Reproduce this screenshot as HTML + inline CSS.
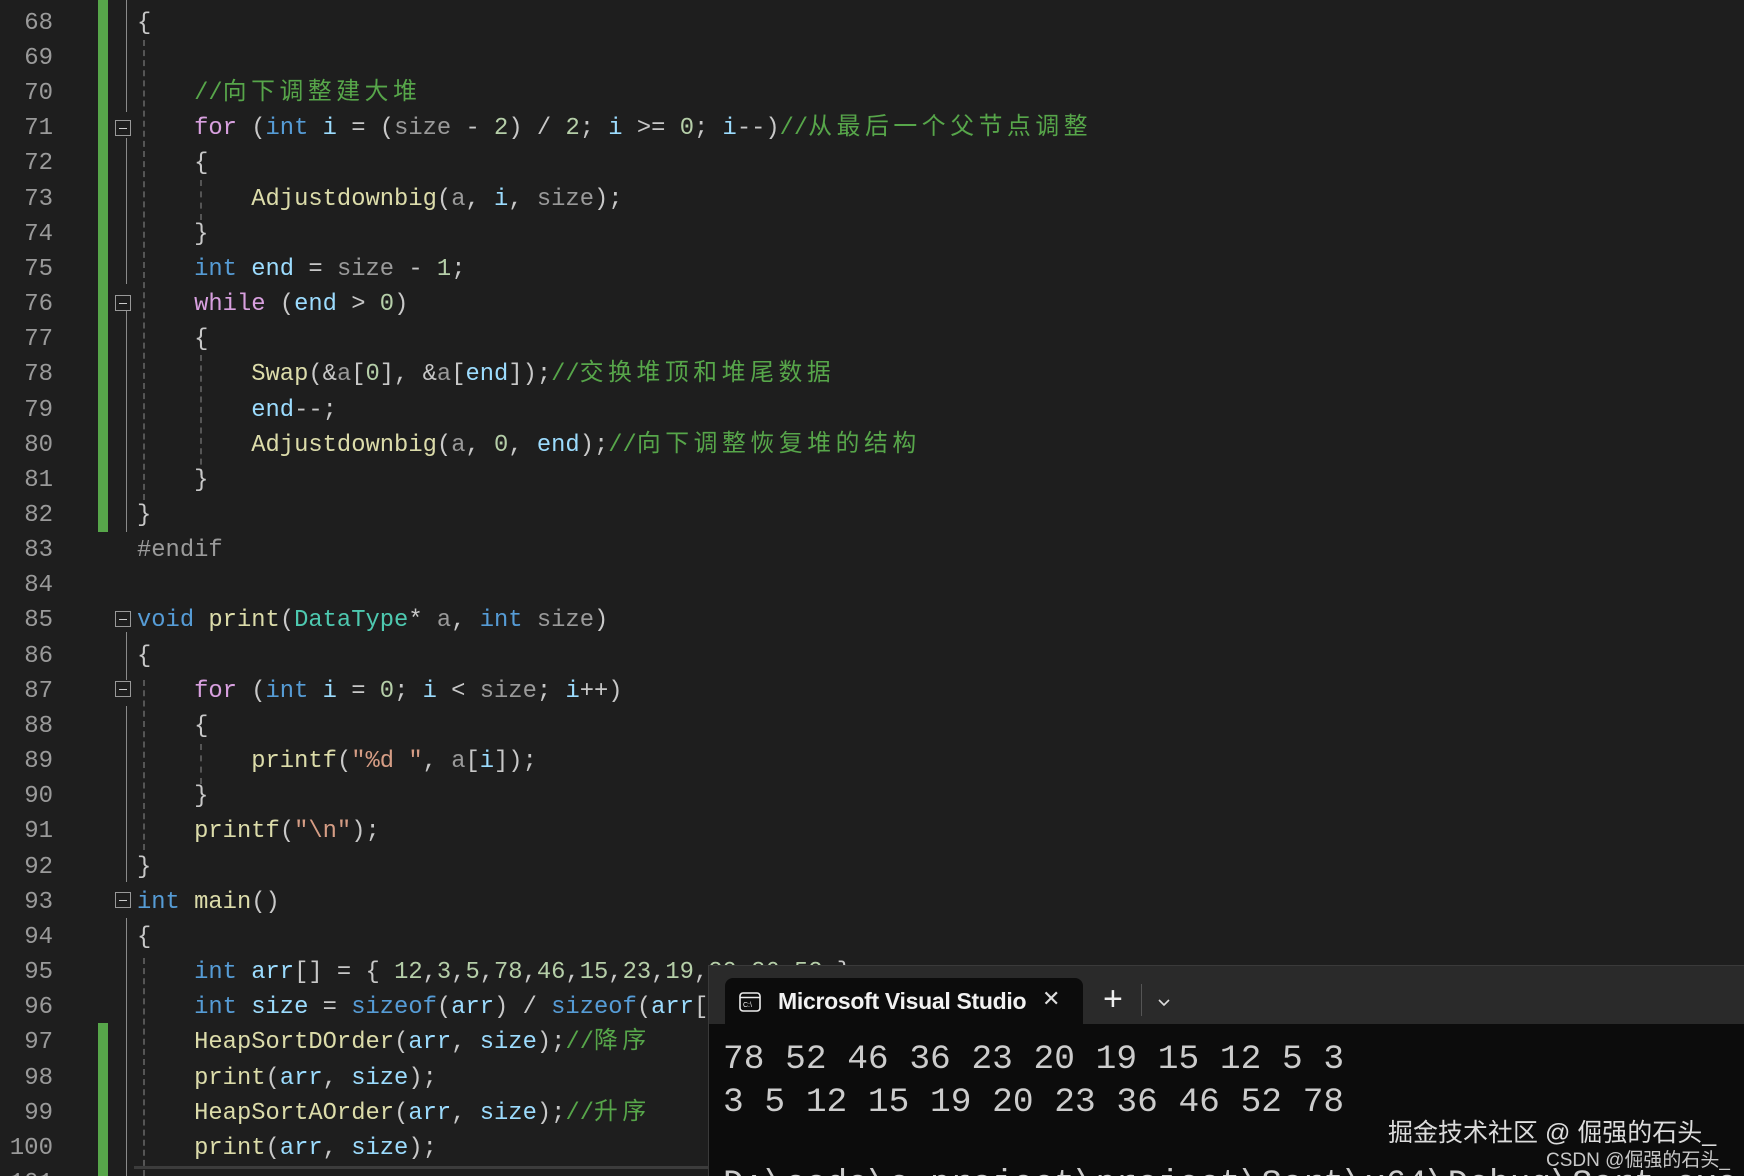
<!DOCTYPE html>
<html style="overflow:hidden;height:1176px"><head><meta charset="utf-8"><style>
html,body{margin:0;padding:0;}
body{width:1744px;height:1176px;background:#1e1e1e;position:relative;overflow:hidden;font-family:"Liberation Mono","Noto Sans CJK SC",monospace;}
.ln{position:absolute;left:0;top:-29.35px;width:53px;text-align:right;color:#9a9a9a;font-size:24px;line-height:35.15px;white-space:pre;}
.code{position:absolute;left:137px;top:-29.35px;color:#c8c8c8;font-size:23.8px;line-height:35.15px;white-space:pre;margin:0;font-family:"Liberation Mono","Noto Sans CJK SC",monospace;}
.k{color:#569cd6}.p{color:#d8a0df}.f{color:#dcdcaa}.v{color:#9cdcfe}.g{color:#9a9a9a}.n{color:#b5cea8}.s{color:#d69d85}.t{color:#4ec9b0}.cm{color:#57a64a}.pp{color:#9b9b9b}
.c{letter-spacing:4.6px}
.bar{position:absolute;left:98px;width:10px;background:#57a64a}
.fold{position:absolute;left:115px;width:16px;height:16px;border:1px solid #999;box-sizing:border-box;background:#1e1e1e}
.fold:after{content:"";position:absolute;left:3px;right:3px;top:6.5px;height:1.5px;background:#ccc}
.vl{position:absolute;width:0;border-left:1.5px solid #8a8a8a}
.dl{position:absolute;width:0;border-left:2px dashed #555}
</style></head><body>
<div class="bar" style="top:0;height:532px"></div>
<div class="bar" style="top:1023px;height:153px"></div>
<div class="vl" style="left:126px;top:0;height:112px"></div>
<div class="vl" style="left:126px;top:138px;height:146px"></div>
<div class="vl" style="left:126px;top:310px;height:222px"></div>
<div class="vl" style="left:126px;top:632px;height:48px"></div>
<div class="vl" style="left:126px;top:706px;height:176px"></div>
<div class="vl" style="left:126px;top:918px;height:258px"></div>
<div class="dl" style="left:143px;top:40px;height:460px"></div>
<div class="dl" style="left:143px;top:680px;height:170px"></div>
<div class="dl" style="left:143px;top:958px;height:218px"></div>
<div class="dl" style="left:200px;top:180px;height:40px"></div>
<div class="dl" style="left:200px;top:355px;height:120px"></div>
<div class="dl" style="left:200px;top:744px;height:40px"></div>
<div class="fold" style="top:120px"></div>
<div class="fold" style="top:295px"></div>
<div class="fold" style="top:611px"></div>
<div class="fold" style="top:681px"></div>
<div class="fold" style="top:892px"></div>
<div class="ln">67
68
69
70
71
72
73
74
75
76
77
78
79
80
81
82
83
84
85
86
87
88
89
90
91
92
93
94
95
96
97
98
99
100
101</div>
<pre class="code"><span class="k">void</span> <span class="f">HeapSortDOrder</span>(<span class="t">DataType</span>* <span class="g">a</span>, <span class="k">int</span> <span class="g">size</span>)
{

    <span class="cm">//<span class="c">向下调整建大堆</span></span>
    <span class="p">for</span> (<span class="k">int</span> <span class="v">i</span> = (<span class="g">size</span> - <span class="n">2</span>) / <span class="n">2</span>; <span class="v">i</span> &gt;= <span class="n">0</span>; <span class="v">i</span>--)<span class="cm">//<span class="c">从最后一个父节点调整</span></span>
    {
        <span class="f">Adjustdownbig</span>(<span class="g">a</span>, <span class="v">i</span>, <span class="g">size</span>);
    }
    <span class="k">int</span> <span class="v">end</span> = <span class="g">size</span> - <span class="n">1</span>;
    <span class="p">while</span> (<span class="v">end</span> &gt; <span class="n">0</span>)
    {
        <span class="f">Swap</span>(&amp;<span class="g">a</span>[<span class="n">0</span>], &amp;<span class="g">a</span>[<span class="v">end</span>]);<span class="cm">//<span class="c">交换堆顶和堆尾数据</span></span>
        <span class="v">end</span>--;
        <span class="f">Adjustdownbig</span>(<span class="g">a</span>, <span class="n">0</span>, <span class="v">end</span>);<span class="cm">//<span class="c">向下调整恢复堆的结构</span></span>
    }
}
<span class="pp">#endif</span>

<span class="k">void</span> <span class="f">print</span>(<span class="t">DataType</span>* <span class="g">a</span>, <span class="k">int</span> <span class="g">size</span>)
{
    <span class="p">for</span> (<span class="k">int</span> <span class="v">i</span> = <span class="n">0</span>; <span class="v">i</span> &lt; <span class="g">size</span>; <span class="v">i</span>++)
    {
        <span class="f">printf</span>(<span class="s">"%d "</span>, <span class="g">a</span>[<span class="v">i</span>]);
    }
    <span class="f">printf</span>(<span class="s">"\n"</span>);
}
<span class="k">int</span> <span class="f">main</span>()
{
    <span class="k">int</span> <span class="v">arr</span>[] = { <span class="n">12</span>,<span class="n">3</span>,<span class="n">5</span>,<span class="n">78</span>,<span class="n">46</span>,<span class="n">15</span>,<span class="n">23</span>,<span class="n">19</span>,<span class="n">20</span>,<span class="n">36</span>,<span class="n">52</span> };
    <span class="k">int</span> <span class="v">size</span> = <span class="k">sizeof</span>(<span class="v">arr</span>) / <span class="k">sizeof</span>(<span class="v">arr</span>[<span class="n">0</span>]);
    <span class="f">HeapSortDOrder</span>(<span class="v">arr</span>, <span class="v">size</span>);<span class="cm">//<span class="c">降序</span></span>
    <span class="f">print</span>(<span class="v">arr</span>, <span class="v">size</span>);
    <span class="f">HeapSortAOrder</span>(<span class="v">arr</span>, <span class="v">size</span>);<span class="cm">//<span class="c">升序</span></span>
    <span class="f">print</span>(<span class="v">arr</span>, <span class="v">size</span>);
</pre>
<div style="position:absolute;left:134px;top:1166px;width:574px;height:3px;background:#3c3c3c"></div>
<!-- terminal -->
<div style="position:absolute;left:708px;top:965px;width:1036px;height:211px;background:#0c0c0c;border-top:1px solid #3a3a3a;border-left:1px solid #3a3a3a;overflow:hidden">
  <div style="position:absolute;left:0;top:0;right:0;height:58px;background:#2a2a2a"></div>
  <div style="position:absolute;left:16px;top:12px;width:358px;height:48px;background:#0c0c0c;border-radius:8px 8px 0 0"></div>
  <svg style="position:absolute;left:30px;top:26px" width="22" height="20" viewBox="0 0 22 20"><rect x="1" y="1" width="20" height="18" rx="3" fill="none" stroke="#eee" stroke-width="1.6"/><line x1="1" y1="5.5" x2="21" y2="5.5" stroke="#eee" stroke-width="1.4"/><text x="4" y="15" font-size="7" fill="#eee" font-family="Liberation Sans">C:\</text></svg>
  <div style="position:absolute;left:69px;top:22px;color:#f2f2f2;font:bold 23px 'Liberation Sans',sans-serif;letter-spacing:-0.3px">Microsoft Visual Studio</div>
  <div style="position:absolute;left:333px;top:20px;color:#ddd;font:22px 'Liberation Sans',sans-serif">✕</div>
  <div style="position:absolute;left:394px;top:14px;color:#eee;font:34px 'Liberation Sans',sans-serif;font-weight:300">+</div>
  <div style="position:absolute;left:432px;top:18px;width:1px;height:32px;background:#555"></div>
  <svg style="position:absolute;left:448px;top:32px" width="14" height="10"><polyline points="2,2 7,7 12,2" fill="none" stroke="#ddd" stroke-width="1.6"/></svg>
  <div style="position:absolute;left:14px;top:72px;color:#cccccc;font:34.5px/43px 'Liberation Mono',monospace;white-space:pre">78 52 46 36 23 20 19 15 12 5 3
3 5 12 15 19 20 23 36 46 52 78</div>
  <div style="position:absolute;left:14px;top:197px;color:#cccccc;font:34.5px/43px 'Liberation Mono',monospace;white-space:pre">D:\code\c-project\project\Sort\x64\Debug\Sort.exe</div>
</div>
<div style="position:absolute;left:1388px;top:1113px;color:#dcdcdc;font:25px 'Liberation Sans','Noto Sans CJK SC',sans-serif;white-space:nowrap">掘金技术社区 @ 倔强的石头_</div>
<div style="position:absolute;left:1546px;top:1145px;color:#c8c8c8;font:19px 'Liberation Sans','Noto Sans CJK SC',sans-serif;white-space:nowrap">CSDN @倔强的石头_</div>
</body></html>
